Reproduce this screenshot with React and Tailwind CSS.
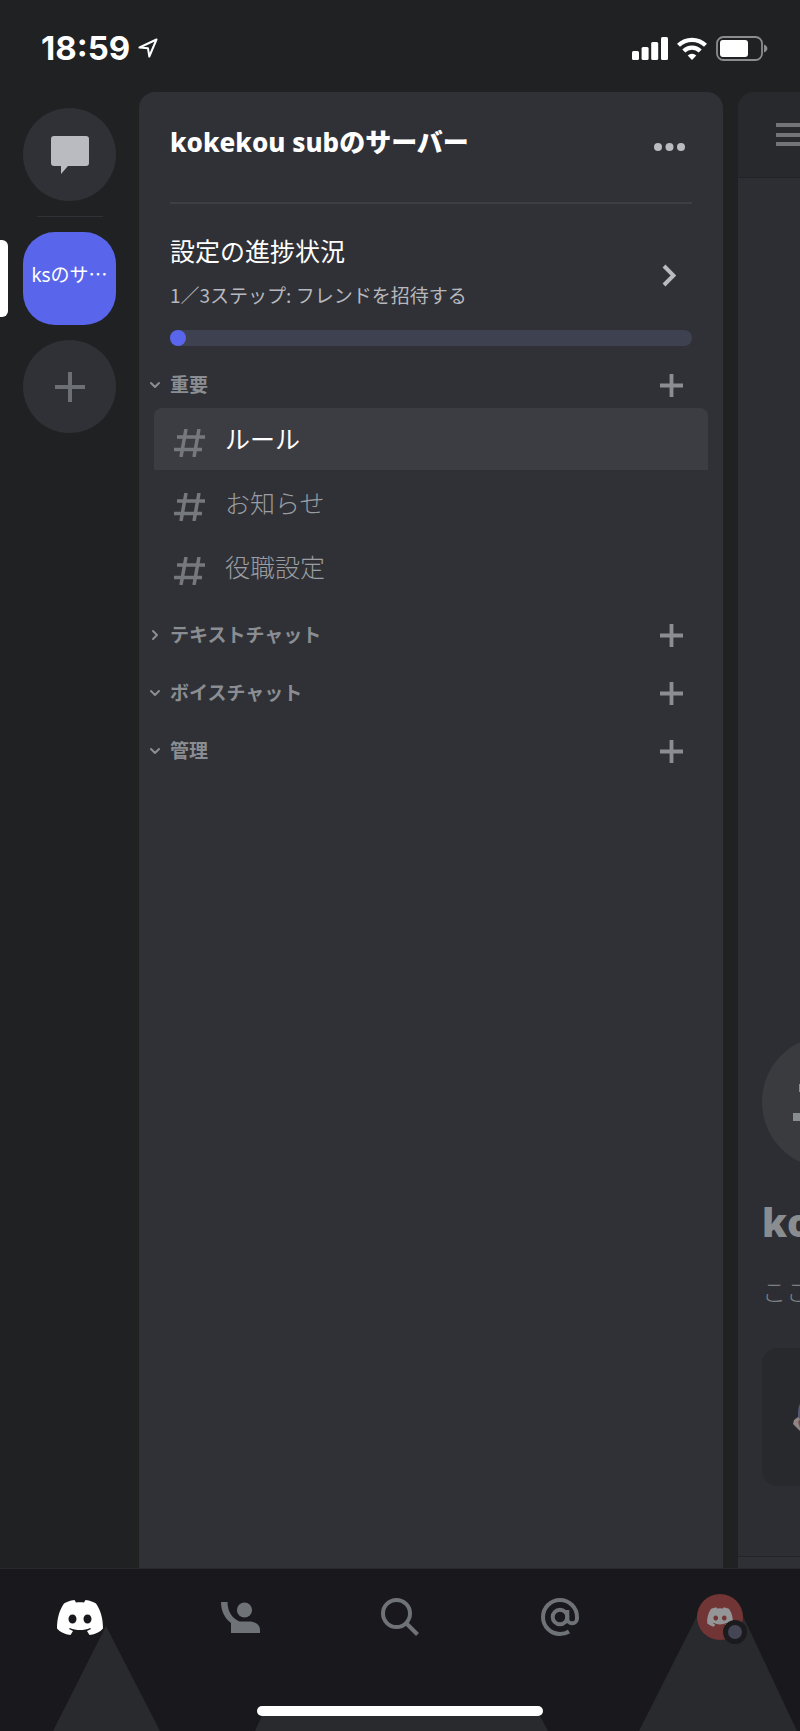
import { ChevronDown, ChevronRight } from 'lucide-react'
import { FaDiscord } from 'react-icons/fa6'

const sections = [
  { name: '重要', open: true, channels: ['ルール', 'お知らせ', '役職設定'] },
  { name: 'テキストチャット', open: false, channels: [] },
  { name: 'ボイスチャット', open: true, channels: [] },
  { name: '管理', open: true, channels: [] },
]

const Plus = ({ className }) => (
  <svg viewBox="0 0 24 24" className={className} fill="currentColor" aria-hidden="true">
    <path d="M10 0h4v10h10v4H14v10h-4V14H0v-4h10z" />
  </svg>
)

const Hash = ({ className }) => (
  <svg viewBox="0 0 31 28" className={className} fill="none" stroke="currentColor" strokeWidth="3.500" aria-hidden="true">
    <path d="M3 8h28M0 20.500h28M12 0 7 28M25 0l-5 28" />
  </svg>
)

const StatusBar = () => (
  <header className="h-[92px] shrink-0 flex items-center justify-between pl-[41px] pr-8 pt-1 text-white">
    <div className="flex items-center gap-2">
      <span className="font-['Inter',sans-serif] text-[33px] leading-9 font-bold">18:59</span>
      <svg viewBox="0 0 20 20" className="w-5 h-5" fill="none" stroke="currentColor" strokeWidth="2" strokeLinejoin="round" aria-hidden="true">
        <path d="M18.500 1.500 1.500 9.500l8.500.8 1.300 8.200z" />
      </svg>
    </div>
    <div className="flex items-center gap-[9px]">
      <svg viewBox="0 0 36 23" className="w-9 h-[23px]" fill="currentColor" aria-hidden="true">
        <rect x="0" y="14" width="7" height="9" rx="1.500" />
        <rect x="9.600" y="10" width="7" height="13" rx="1.500" />
        <rect x="19.200" y="5" width="7" height="18" rx="1.500" />
        <rect x="29" y="0" width="7" height="23" rx="1.500" />
      </svg>
      <svg viewBox="0 0 30 23" className="w-[30px] h-[23px]" fill="none" stroke="currentColor" strokeWidth="4.300" aria-hidden="true">
        <path d="M1.500 8.300a19.500 19.500 0 0 1 27 0" />
        <path d="M6.800 14a11.800 11.800 0 0 1 16.400 0" />
        <path d="m15 23-4.300-4.500a6.200 6.200 0 0 1 8.600 0z" fill="currentColor" stroke="none" />
      </svg>
      <svg viewBox="0 0 52 25" className="w-[52px] h-[25px]" fill="none" aria-hidden="true">
        <rect x="1" y="1" width="45" height="23" rx="6.500" stroke="#8d8d90" strokeWidth="1.800" />
        <rect x="4" y="4" width="28" height="17" rx="3" fill="#fff" />
        <path d="M48 8.500c4.500 1.500 4.500 6.500 0 8z" fill="#8d8d90" />
      </svg>
    </div>
  </header>
)

const ServerRail = () => (
  <nav aria-label="サーバー" className="w-[139px] shrink-0 pt-4 flex flex-col items-center gap-[15px]">
    <button aria-label="ダイレクトメッセージ" className="w-[93px] h-[93px] rounded-full bg-[#303136] text-[#babbc1] flex items-center justify-center">
      <svg viewBox="0 0 38 38" className="w-[38px] h-[38px]" fill="currentColor" aria-hidden="true">
        <path d="M3 0h32a3 3 0 0 1 3 3v24a3 3 0 0 1-3 3H17l-7 8v-8H3a3 3 0 0 1-3-3V3a3 3 0 0 1 3-3z" />
      </svg>
    </button>
    <div className="w-[66px] h-px bg-[#303136]" />
    <div className="relative w-full flex justify-center">
      <span className="absolute left-0 top-2 w-2 h-[77px] rounded-r-md bg-white" />
      <button className="w-[93px] h-[93px] rounded-[32px] bg-[#5965ea] text-white text-[19px] leading-7 pb-2 text-center">
        ksのサ⋯
      </button>
    </div>
    <button aria-label="サーバーを追加" className="w-[93px] h-[93px] rounded-full bg-[#303136] text-[#6c6f74] flex items-center justify-center">
      <svg viewBox="0 0 30 30" className="w-[30px] h-[30px]" stroke="currentColor" strokeWidth="4" aria-hidden="true">
        <path d="M15 0v30M0 15h30" />
      </svg>
    </button>
  </nav>
)

const Section = ({ section }) => {
  const Chevron = section.open ? ChevronDown : ChevronRight
  return (
    <section>
      <div className="h-[46px] pl-2 pr-10 flex items-center justify-between text-[#8a8d92]">
        <button className="flex items-center gap-[7px] text-[19px] leading-7 font-bold">
          <Chevron className="w-4 h-4" strokeWidth={3} />
          {section.name}
        </button>
        <button aria-label={`${section.name}にチャンネルを追加`}>
          <Plus className="w-[23px] h-[23px]" />
        </button>
      </div>
      {section.channels.length > 0 &&
        <ul className="px-[15px] pb-0.5 flex flex-col gap-0.5">
          {section.channels.map((channel, i) => (
            <li key={channel}>
              <a
                href="#"
                className={`h-[62px] pl-5 flex items-center gap-5 rounded-t-lg text-[25px] leading-9 ${i === 0 ? 'bg-[#3c3d42] text-white' : 'font-light text-[#9a9da2]'}`}
              >
                <Hash className="w-[31px] h-7 mt-2 text-[#75787d]" />
                <span>{channel}</span>
              </a>
            </li>
          ))}
        </ul>
      }
    </section>
  )
}

const ChannelPanel = () => (
  <main className="flex-1 min-w-0 rounded-t-2xl bg-[#303136]">
    <div className="mx-[31px] h-28 pb-2.5 flex items-center justify-between border-b-2 border-[#3d3e44]">
      <h1 className="text-[26px] leading-9 font-extrabold text-white">kokekou subのサーバー</h1>
      <button aria-label="その他" className="mr-[7px] mt-2.5 text-[#babbc1]">
        <svg viewBox="0 0 31 8" className="w-[31px] h-2" fill="currentColor" aria-hidden="true">
          <circle cx="4" cy="4" r="4" />
          <circle cx="15.500" cy="4" r="4" />
          <circle cx="27" cy="4" r="4" />
        </svg>
      </button>
    </div>
    <div className="mx-[31px] pt-[29px] mb-4">
      <a href="#" className="flex items-center justify-between">
        <div>
          <h2 className="text-[25px] leading-9 text-white">設定の進捗状況</h2>
          <p className="mt-3 font-['Noto_Sans_CJK_JP',sans-serif] text-[19px] leading-7 text-[#b6b8be]">1／3ステップ: フレンドを招待する</p>
        </div>
        <svg viewBox="0 0 14 23" className="w-[14px] h-[23px] mr-4 mt-2 text-[#babbc1]" fill="none" stroke="currentColor" strokeWidth="4" aria-hidden="true">
          <path d="m2 2 9.500 9.500L2 21" />
        </svg>
      </a>
      <div className="mt-[21px] h-4 rounded-full bg-[#3e4250]">
        <div className="w-4 h-4 rounded-full bg-[#5965ea]" />
      </div>
    </div>
    <div className="flex flex-col gap-3">
      {sections.map((section) => <Section key={section.name} section={section} />)}
    </div>
  </main>
)

// Only the left edge of the chat is on screen, the rest is clipped
const ChatPeek = () => (
  <aside className="w-[62px] shrink-0 ml-[15px] rounded-tl-2xl bg-[#2d2e33] overflow-hidden flex flex-col">
    <div className="h-[86px] pl-[38px] pt-[31px] bg-[#28292d] border-b border-[#222326]">
      <svg viewBox="0 0 36 24" className="w-9 h-6 max-w-none" fill="#727478" aria-hidden="true">
        <path d="M0 0h36v4H0zM0 10h36v4H0zM0 19h36v4H0z" />
      </svg>
    </div>
    <div className="flex-1 pl-6 pb-[70px] flex flex-col justify-end items-start whitespace-nowrap">
      <div className="w-[132px] h-[132px] shrink-0 rounded-full bg-[#3a3b3f] flex items-center justify-center">
        <svg viewBox="0 0 70 66" className="w-[70px] h-[66px]" stroke="#8a8d90" strokeWidth="8" aria-hidden="true">
          <path d="M6 19h64M0 48h65M26 0 14 66M56 0 44 66" />
        </svg>
      </div>
      <h2 className="mt-7 text-[38px] leading-[52px] font-black text-[#8a8d90]">kokekou sub</h2>
      <p className="mt-[26px] text-[24px] leading-9 font-light text-[#7e8085]">ここが始まりです</p>
      <div className="mt-[38px] w-[300px] h-[138px] shrink-0 rounded-2xl bg-[#28292d] pl-[31px] flex items-center">
        <svg viewBox="0 0 40 40" className="w-10 h-10" aria-hidden="true">
          <path d="M5 16c0-6 2-10 4-12l25-2v30L5 22z" fill="#555775" />
          <path d="m0 27 1-4 4-3 12 13-5 6z" fill="#8e8585" />
          <path d="m5 25 3-4 6 8-6 5z" fill="#7d4548" />
        </svg>
      </div>
    </div>
    <div className="h-3 shrink-0 border-t border-[#222326] bg-[#2f3035]" />
  </aside>
)

const TabBar = () => (
  <footer className="relative h-[163px] shrink-0 bg-[#19181c] border-t border-[#29292c]">
    <svg viewBox="0 0 800 162" preserveAspectRatio="none" className="absolute inset-0 w-full h-full" fill="#292a2d" aria-hidden="true">
      <path d="M106 57 160 162H53zM262 147h278l8 15H255zM697 47h46l54 115H639z" />
    </svg>
    <nav aria-label="メイン" className="relative h-24 grid grid-cols-5 place-items-center text-[#6f7277]">
      <a href="#" aria-label="ホーム" className="text-white">
        <svg viewBox="0 0 46 35" className="w-[46px] h-[35px]" fill="currentColor" aria-hidden="true">
          <path fillRule="evenodd" d="M17.500 0C13 .6 9 2 7 3.500 2.500 10 0 18 0 28.500 3 32 7.500 34.200 13.500 35l2.500-4-4-2 .8-1c6.500 2.700 14 2.700 20.400 0l.8 1-4 2 2.500 4c6-.8 10.500-3 13.500-6.500C46 18 43.500 10 39 3.500 37 2 33 .6 28.500 0L27 2.500c-2.700-.4-5.300-.4-8 0zM15.500 14.500c2.300 0 4 2 4 4.500s-1.700 4.500-4 4.500-4-2-4-4.500 1.700-4.500 4-4.500zM30.500 14.500c2.300 0 4 2 4 4.500s-1.700 4.500-4 4.500-4-2-4-4.500 1.700-4.500 4-4.500z" />
        </svg>
      </a>
      <a href="#" aria-label="フレンド">
        <svg viewBox="0 0 39 31" className="w-[39px] h-[31px]" fill="currentColor" aria-hidden="true">
          <circle cx="23.500" cy="8" r="7.600" />
          <path d="M0 0h6.500c0 9 4 16 12 19.500H28c7 0 11 3.500 11 8V31H10V21C3.500 16 0 9 0 0z" />
        </svg>
      </a>
      <a href="#" aria-label="検索">
        <svg viewBox="0 0 38 38" className="w-[38px] h-[38px]" fill="none" stroke="currentColor" strokeWidth="4" aria-hidden="true">
          <circle cx="15.500" cy="15.500" r="13.500" />
          <path d="m25 25 11.500 11.500" />
        </svg>
      </a>
      <a href="#" aria-label="メンション">
        <svg viewBox="0 0 38 38" className="w-[38px] h-[38px]" fill="none" stroke="currentColor" strokeWidth="4" aria-hidden="true">
          <circle cx="19" cy="19" r="7.300" />
          <path d="M26.300 12v8.500a4.800 4.800 0 0 0 9.700 0V19a17 17 0 1 0-17 17c3.500 0 6.500-.9 9-2.500" />
        </svg>
      </a>
      <a href="#" aria-label="プロフィール" className="relative w-[46px] h-[46px] rounded-full bg-[#713535] text-[#939597] flex items-center justify-center">
        <FaDiscord className="w-7 h-7" />
        <span className="absolute left-[26px] top-[26px] w-6 h-6 rounded-full bg-[#444555] border-[5px] border-[#1b1b1e]" />
      </a>
    </nav>
    <div className="absolute bottom-[15px] left-1/2 -translate-x-1/2 w-[286px] h-[10px] rounded-full bg-white" />
  </footer>
)

const App = () => {
  return (
    <div lang="ja" className="min-h-screen flex flex-col overflow-hidden bg-[#202123] font-['Noto_Sans','Noto_Sans_CJK_JP',sans-serif]">
      <StatusBar />
      <div className="flex-1 flex">
        <ServerRail />
        <ChannelPanel />
        <ChatPeek />
      </div>
      <TabBar />
    </div>
  )
}

export default App
